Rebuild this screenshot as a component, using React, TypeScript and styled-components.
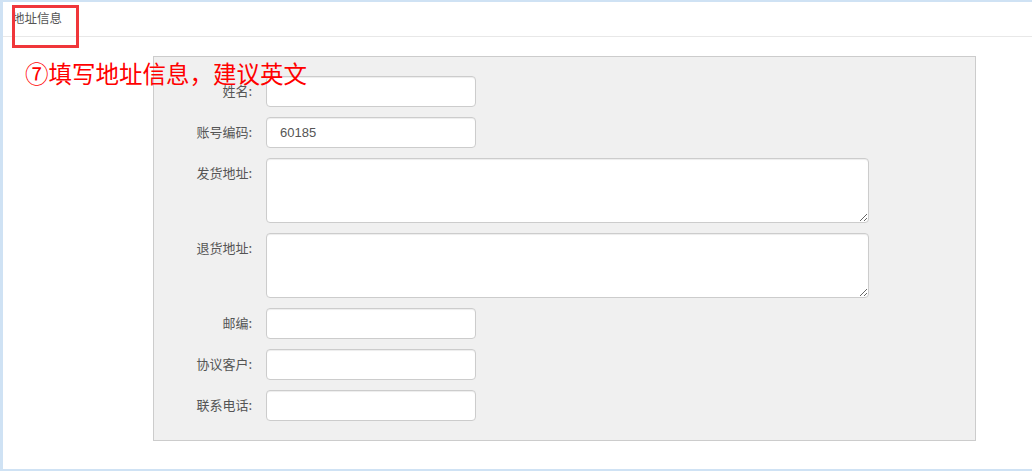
import React from "react";
import styled, { createGlobalStyle } from "styled-components";

const GlobalStyle = createGlobalStyle`
  html, body {
    margin: 0;
    padding: 0;
    background: #cfe2f4;
  }
  body {
    font-family: "Noto Sans CJK SC", "Liberation Sans", sans-serif;
    font-size: 12px;
    color: #555;
  }
`;

interface Field {
  label: string;
  value?: string;
  multiline?: boolean;
}

const fields: Field[] = [
  { label: "姓名:" },
  { label: "账号编码:", value: "60185" },
  { label: "发货地址:", multiline: true },
  { label: "退货地址:", multiline: true },
  { label: "邮编:" },
  { label: "协议客户:" },
  { label: "联系电话:" },
];

const App: React.FC = () => {
  return (
    <>
      <GlobalStyle />
      <Page>
        <Header>
          <HeaderTitle>地址信息</HeaderTitle>
        </Header>
        <Content>
          <FormPanel>
            {fields.map((f, idx) => (
              <Row key={idx}>
                <Label>{f.label}</Label>
                {f.multiline ? (
                  <TextArea defaultValue={f.value} />
                ) : (
                  <Input type="text" defaultValue={f.value} />
                )}
              </Row>
            ))}
          </FormPanel>
        </Content>
        <HighlightBox />
        <Annotation>⑦填写地址信息，建议英文</Annotation>
      </Page>
    </>
  );
};

const Page = styled.div`
  position: relative;
  margin: 2px 0 0 3px;
  height: 467px;
  background: #fff;
  box-sizing: border-box;
`;

const Header = styled.div`
  height: 34px;
  border-bottom: 1px solid #e8e8e8;
  display: flex;
  align-items: center;
  padding-left: 9px;
`;

const HeaderTitle = styled.span`
  font-size: 12.5px;
  color: #555;
  position: relative;
  top: -2px;
`;

const Content = styled.div`
  padding: 19px 56px 0 150px;
`;

const FormPanel = styled.div`
  background: #f0f0f0;
  border: 1px solid #ccc;
  padding: 19px 0 19px;
  display: flex;
  flex-direction: column;
  gap: 10px;
`;

const Row = styled.div`
  display: grid;
  grid-template-columns: 98px 603px;
  column-gap: 14px;
  align-items: start;
`;

const Label = styled.label`
  text-align: right;
  padding-top: 6px;
  line-height: 18px;
  font-size: 13px;
  color: #555;
`;

const Input = styled.input`
  box-sizing: border-box;
  width: 210px;
  height: 31px;
  border: 1px solid #ccc;
  border-radius: 4px;
  background: #fff;
  box-shadow: inset 0 1px 1px rgba(0, 0, 0, 0.075);
  padding: 0 13px;
  font-family: "Liberation Sans", "Noto Sans CJK SC", sans-serif;
  font-size: 13px;
  color: #555;
  outline: none;
`;

const TextArea = styled.textarea`
  box-sizing: border-box;
  width: 603px;
  height: 65px;
  border: 1px solid #ccc;
  border-radius: 4px;
  background: #fff;
  box-shadow: inset 0 1px 1px rgba(0, 0, 0, 0.075);
  padding: 6px 12px;
  font-family: "Liberation Sans", "Noto Sans CJK SC", sans-serif;
  font-size: 13px;
  color: #555;
  outline: none;
  display: block;
`;

const HighlightBox = styled.div`
  position: absolute;
  left: 9px;
  top: 3px;
  width: 67px;
  height: 43px;
  box-sizing: border-box;
  border: 3px solid #f0363a;
`;

const Annotation = styled.div`
  position: absolute;
  left: 22px;
  top: 56px;
  font-size: 23.5px;
  line-height: 30px;
  color: #ff0000;
  font-family: "Noto Sans CJK SC", sans-serif;
  white-space: nowrap;
`;

export default App;
